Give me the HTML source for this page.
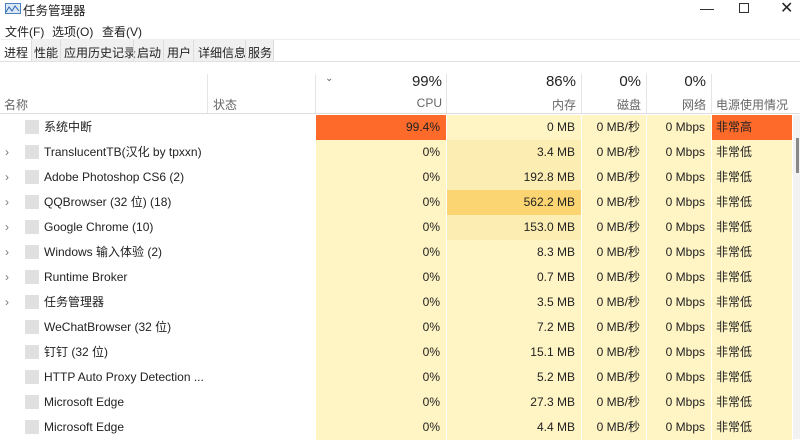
<!DOCTYPE html><html><head><meta charset="utf-8"><style>
*{margin:0;padding:0;box-sizing:border-box}
body{width:800px;height:439px;overflow:hidden;background:#fff;font-family:"Liberation Sans","Noto Sans CJK SC",sans-serif;font-size:12px;color:#222;position:relative}
.a{position:absolute;white-space:nowrap}
.r{position:absolute;left:0;width:792px;height:25px}
.c{position:absolute;top:0;height:25px;line-height:25px;text-align:right;padding-right:6px}
</style></head><body>
<svg class="a" style="left:5px;top:3px" width="16" height="11"><rect x="0.5" y="0.5" width="15" height="10" fill="#dbe9f7" stroke="#4a7fc0"/><path d="M1 9 L4 4 L7 8 L10 3 L14 8" stroke="#2a62b0" fill="none"/></svg>
<div class="a" style="left:23px;top:0px;font-size:12.5px">任务管理器</div>
<div class="a" style="left:700px;top:0px;font-size:14px">—</div>
<div class="a" style="left:739px;top:3px;width:10px;height:10px;border:1.3px solid #333"></div>
<div class="a" style="left:780px;top:-2px;font-size:16px">✕</div>
<div class="a" style="left:5px;top:23px">文件(F)</div>
<div class="a" style="left:52px;top:23px">选项(O)</div>
<div class="a" style="left:102px;top:23px">查看(V)</div>
<div class="a" style="left:0;top:39px;width:800px;border-top:1px solid #eee"></div>
<div class="a" style="left:0;top:61px;width:800px;border-top:1px solid #e2e2e2"></div>
<div class="a" style="left:4px;top:44px">进程</div>
<div class="a" style="left:31px;top:40px;height:21px;width:243px;background:#f0f0f0;border-left:1px solid #ddd;border-right:1px solid #ddd"></div>
<div class="a" style="left:34px;top:44px">性能</div>
<div class="a" style="left:60px;top:40px;height:21px;border-left:1px solid #ddd"></div>
<div class="a" style="left:64px;top:44px">应用历史记录</div>
<div class="a" style="left:133px;top:40px;height:21px;border-left:1px solid #ddd"></div>
<div class="a" style="left:137px;top:44px">启动</div>
<div class="a" style="left:163px;top:40px;height:21px;border-left:1px solid #ddd"></div>
<div class="a" style="left:167px;top:44px">用户</div>
<div class="a" style="left:193px;top:40px;height:21px;border-left:1px solid #ddd"></div>
<div class="a" style="left:198px;top:44px">详细信息</div>
<div class="a" style="left:245px;top:40px;height:21px;border-left:1px solid #ddd"></div>
<div class="a" style="left:248px;top:44px">服务</div>
<!-- header -->
<div class="a" style="left:207px;top:74px;height:39px;border-left:1px solid #e5e5e5"></div>
<div class="a" style="left:315px;top:74px;height:39px;border-left:1px solid #e5e5e5"></div>
<div class="a" style="left:446px;top:74px;height:39px;border-left:1px solid #e5e5e5"></div>
<div class="a" style="left:581px;top:74px;height:39px;border-left:1px solid #e5e5e5"></div>
<div class="a" style="left:646px;top:74px;height:39px;border-left:1px solid #e5e5e5"></div>
<div class="a" style="left:711px;top:74px;height:39px;border-left:1px solid #e5e5e5"></div>
<div class="a" style="left:0;top:113px;width:800px;border-top:1px solid #ddd"></div>
<div class="a" style="left:4px;top:96px;color:#666">名称</div>
<div class="a" style="left:213px;top:96px;color:#666">状态</div>
<div class="a" style="left:325px;top:73px;color:#666;font-size:10px">⌄</div>
<div class="a" style="left:315px;width:127px;text-align:right;top:73px;font-size:15px">99%</div>
<div class="a" style="left:315px;width:127px;text-align:right;top:96px;color:#666">CPU</div>
<div class="a" style="left:446px;width:130px;text-align:right;top:73px;font-size:15px">86%</div>
<div class="a" style="left:446px;width:130px;text-align:right;top:96px;color:#666">内存</div>
<div class="a" style="left:581px;width:60px;text-align:right;top:73px;font-size:15px">0%</div>
<div class="a" style="left:581px;width:60px;text-align:right;top:96px;color:#666">磁盘</div>
<div class="a" style="left:646px;width:60px;text-align:right;top:73px;font-size:15px">0%</div>
<div class="a" style="left:646px;width:60px;text-align:right;top:96px;color:#666">网络</div>
<div class="a" style="left:716px;top:96px;color:#666">电源使用情况</div>
<div class="a" style="left:793px;top:115px;width:7px;height:324px;background:#f2f2f2"></div>
<div class="a" style="left:796px;top:138px;width:3px;height:35px;background:#888"></div>
<div id="rows"></div>
<script>
var d=[["系统中断",0,"99.4%","0 MB","非常高",0],["TranslucentTB(汉化 by tpxxn)",1,"0%","3.4 MB","非常低",1],["Adobe Photoshop CS6 (2)",1,"0%","192.8 MB","非常低",1],["QQBrowser (32 位) (18)",1,"0%","562.2 MB","非常低",2],["Google Chrome (10)",1,"0%","153.0 MB","非常低",1],["Windows 输入体验 (2)",1,"0%","8.3 MB","非常低",0],["Runtime Broker",1,"0%","0.7 MB","非常低",0],["任务管理器",1,"0%","3.5 MB","非常低",0],["WeChatBrowser (32 位)",0,"0%","7.2 MB","非常低",0],["钉钉 (32 位)",0,"0%","15.1 MB","非常低",0],["HTTP Auto Proxy Detection ...",0,"0%","5.2 MB","非常低",0],["Microsoft Edge",0,"0%","27.3 MB","非常低",0],["Microsoft Edge",0,"0%","4.4 MB","非常低",0]];
var h="";d.forEach(function(r,i){var y=115+i*25,hi=i==0;var mc=r[5]==2?"#fbd571":r[5]==1?"#fcedb2":"#fff4c4";
h+='<div class="r" style="top:'+y+'px">'+(r[1]?'<div class="c" style="left:5px;color:#777;text-align:left">›</div>':'')+
'<div class="a" style="left:25px;top:5px;width:14px;height:14px;background:#e0e0e0"></div><div class="a" style="left:44px;line-height:25px">'+r[0]+'</div>'+
'<div class="c" style="left:316px;width:130px;background:'+(hi?"#fd6a29":"#fff4c4")+'">'+r[2]+'</div>'+
'<div class="c" style="left:447px;width:134px;background:'+mc+'">'+r[3]+'</div>'+
'<div class="c" style="left:582px;width:64px;background:#fff4c4">0 MB/秒</div>'+
'<div class="c" style="left:647px;width:64px;background:#fff4c4">0 Mbps</div>'+
'<div class="c" style="left:712px;width:80px;text-align:left;padding-left:4px;background:'+(hi?"#fd6a29":"#fff4c4")+'">'+r[4]+'</div></div>';});
document.getElementById("rows").innerHTML=h;
</script>
</body></html>
